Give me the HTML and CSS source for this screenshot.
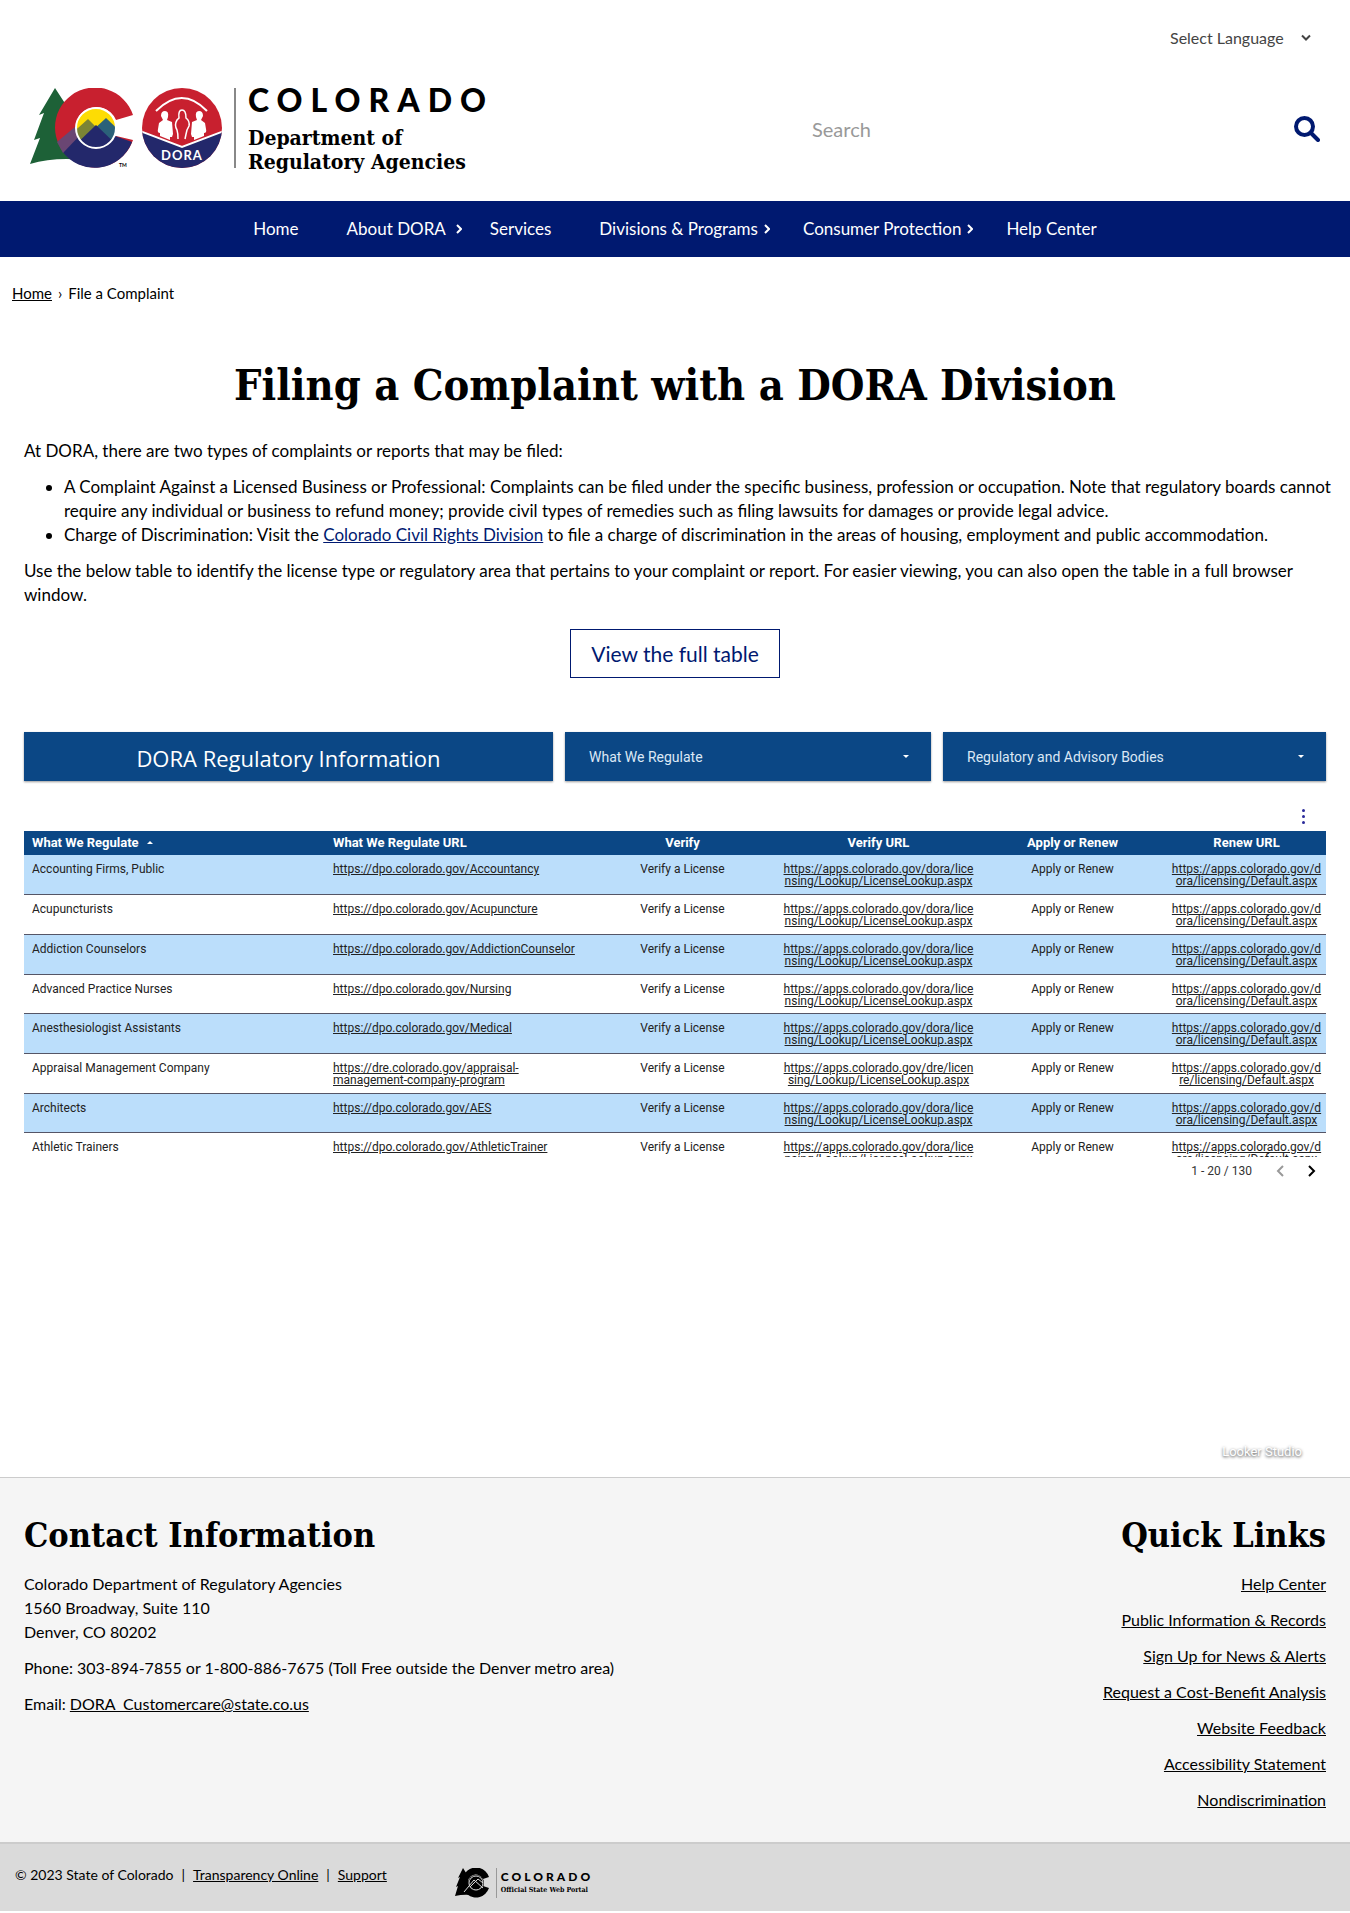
FILE: index.html
```html
<!DOCTYPE html>
<html lang="en">
<head>
<meta charset="utf-8">
<meta name="viewport" content="width=device-width, initial-scale=1">
<title>File a Complaint | DORA</title>
<link rel="stylesheet" href="styles.css">
</head>
<body>
<header class="site-header">
  <div class="language">
    <select class="language-select" aria-label="Select Language">
      <option>Select Language</option>
    </select>
    <svg class="language-arrow" viewBox="0 0 12 8" aria-hidden="true"><path d="M2 1.5l4 4 4-4"/></svg>
  </div>
  <div class="masthead">
    <a class="brand" href="#" aria-label="Colorado Department of Regulatory Agencies">
      <svg class="brand-mark" viewBox="0 0 206 80" aria-hidden="true">
        <defs>
          <clipPath id="sun"><circle cx="66" cy="40" r="20"/></clipPath>
          <clipPath id="seal"><circle cx="152" cy="40" r="40"/></clipPath>
        </defs>
        <path fill="#1d6137" d="M25 0L38 20 34 22 44 40 54 72Q24 69 0 76L10 50 4 52 14 25 9 27Z"/>
        <path fill="#c8202f" d="M103 27A40 40 0 1 0 103 52L86 48A21 21 0 1 1 86 32Z"/>
        <path fill="#23286b" d="M32 63L52 45 60 60 85 48 102 54A40 40 0 0 1 32 63Z"/>
        <path fill="#6a4673" d="M27 54L46 38 53 44 33 65Z"/>
        <g clip-path="url(#sun)">
          <path fill="#fddc04" d="M40 15h60v50H40z"/>
          <path fill="#7b8435" d="M40 47L58 31 67 40 54 54 40 62Z"/>
          <path fill="#2b6179" d="M62 43L76 30 92 45V55H80Z"/>
          <path fill="#23286b" d="M40 62L66 37 92 62Z"/>
        </g>
        <circle cx="66" cy="40" r="20" fill="none" stroke="#fff" stroke-width="2"/>
        <g clip-path="url(#seal)">
          <path fill="#c8202f" d="M110 0h84v80h-84z"/>
          <path fill="#23286b" d="M110 43L152 59 194 43V82H110Z"/>
          <path fill="none" stroke="#fff" stroke-width="2" d="M110 43L152 59 194 43"/>
        </g>
        <path fill="none" stroke="#fff" stroke-width="2" d="M126 23Q152 -3 177 23"/>
        <g fill="#fff">
          <path d="M131 28q0-5 4-5t3 6l-1 3 5 2 1 12-1 3h-2v3l-10-4v-3q-3 0-2-4l1-6 4-3z"/>
          <path d="M173 28q0-5-4-5t-3 6l1 3-5 2-1 12 1 3h2v3l10-4v-3q3 0 2-4l-1-6-4-3z"/>
        </g>
        <path fill="none" stroke="#fff" stroke-width="1.5" d="M148 51q0-6-1-9-3-5 0-10l2-2q-1-8 3-8t4 8q4 3 3 8l-2 4q-1 4-2 9"/>
        <text class="seal-text" x="152" y="72">DORA</text>
        <text class="tm-text" x="89" y="79">TM</text>
        <path fill="#888" d="M204 0h2v80h-2z"/>
      </svg>
      <span class="brand-words">
        <span class="brand-state">COLORADO</span>
        <span class="brand-dept">Department of<br>Regulatory Agencies</span>
      </span>
    </a>
    <form class="search" role="search">
      <input class="search-input" type="search" placeholder="Search" aria-label="Search">
      <button class="search-button" type="button" aria-label="Search">
        <svg viewBox="0 0 26 26" aria-hidden="true"><circle cx="10.5" cy="10.5" r="8.5"/><path d="M17 17l7 7"/></svg>
      </button>
    </form>
  </div>
</header>
<nav class="main-nav" aria-label="Main">
  <ul class="nav-list">
    <li><a class="nav-link" href="#">Home</a></li>
    <li><a class="nav-link nav-parent nav-spaced" href="#">About DORA<svg class="nav-arrow" viewBox="0 0 6 10" aria-hidden="true"><path d="M1 1l4 4-4 4"/></svg></a></li>
    <li><a class="nav-link" href="#">Services</a></li>
    <li><a class="nav-link nav-parent" href="#">Divisions &amp; Programs<svg class="nav-arrow" viewBox="0 0 6 10" aria-hidden="true"><path d="M1 1l4 4-4 4"/></svg></a></li>
    <li><a class="nav-link nav-parent" href="#">Consumer Protection<svg class="nav-arrow" viewBox="0 0 6 10" aria-hidden="true"><path d="M1 1l4 4-4 4"/></svg></a></li>
    <li><a class="nav-link" href="#">Help Center</a></li>
  </ul>
</nav>
<nav class="breadcrumb" aria-label="Breadcrumb"><a href="#">Home</a><span>›</span><span>File a Complaint</span></nav>
<main class="content">
  <h1 class="page-title">Filing a Complaint with a DORA Division</h1>
  <p>At DORA, there are two types of complaints or reports that may be filed:</p>
  <ul class="types">
    <li>A Complaint Against a Licensed Business or Professional: Complaints can be filed under the specific business, profession or occupation. Note that regulatory boards cannot require any individual or business to refund money; provide civil types of remedies such as filing lawsuits for damages or provide legal advice.</li>
    <li>Charge of Discrimination: Visit the <a class="text-link" href="#">Colorado Civil Rights Division</a> to file a charge of discrimination in the areas of housing, employment and public accommodation.</li>
  </ul>
  <p>Use the below table to identify the license type or regulatory area that pertains to your complaint or report. For easier viewing, you can also open the table in a full browser window.</p>
  <a class="full-table" href="#">View the full table</a>
  <section class="report">
    <div class="report-bar">
      <div class="report-title">DORA Regulatory Information</div>
      <button class="report-filter" type="button">What We Regulate<span class="caret"></span></button>
      <button class="report-filter" type="button">Regulatory and Advisory Bodies<span class="caret"></span></button>
    </div>
    <button class="more" type="button" aria-label="More options"><span></span><span></span><span></span></button>
    <div class="table-window">
      <table class="data">
        <colgroup><col class="c1"><col class="c2"><col class="c3"><col class="c4"><col class="c5"><col class="c6"></colgroup>
        <thead><tr><th>What We Regulate<span class="sort"></span></th><th>What We Regulate URL</th><th>Verify</th><th>Verify URL</th><th>Apply or Renew</th><th>Renew URL</th></tr></thead>
        <tbody>
          <tr><td>Accounting Firms, Public</td><td><a href="#">https://dpo.colorado.gov/Accountancy</a></td><td>Verify a License</td><td><a href="#">https://apps.colorado.gov/dora/lice<br>nsing/Lookup/LicenseLookup.aspx</a></td><td>Apply or Renew</td><td><a href="#">https://apps.colorado.gov/d<br>ora/licensing/Default.aspx</a></td></tr>
          <tr><td>Acupuncturists</td><td><a href="#">https://dpo.colorado.gov/Acupuncture</a></td><td>Verify a License</td><td><a href="#">https://apps.colorado.gov/dora/lice<br>nsing/Lookup/LicenseLookup.aspx</a></td><td>Apply or Renew</td><td><a href="#">https://apps.colorado.gov/d<br>ora/licensing/Default.aspx</a></td></tr>
          <tr><td>Addiction Counselors</td><td><a href="#">https://dpo.colorado.gov/AddictionCounselor</a></td><td>Verify a License</td><td><a href="#">https://apps.colorado.gov/dora/lice<br>nsing/Lookup/LicenseLookup.aspx</a></td><td>Apply or Renew</td><td><a href="#">https://apps.colorado.gov/d<br>ora/licensing/Default.aspx</a></td></tr>
          <tr><td>Advanced Practice Nurses</td><td><a href="#">https://dpo.colorado.gov/Nursing</a></td><td>Verify a License</td><td><a href="#">https://apps.colorado.gov/dora/lice<br>nsing/Lookup/LicenseLookup.aspx</a></td><td>Apply or Renew</td><td><a href="#">https://apps.colorado.gov/d<br>ora/licensing/Default.aspx</a></td></tr>
          <tr><td>Anesthesiologist Assistants</td><td><a href="#">https://dpo.colorado.gov/Medical</a></td><td>Verify a License</td><td><a href="#">https://apps.colorado.gov/dora/lice<br>nsing/Lookup/LicenseLookup.aspx</a></td><td>Apply or Renew</td><td><a href="#">https://apps.colorado.gov/d<br>ora/licensing/Default.aspx</a></td></tr>
          <tr><td>Appraisal Management Company</td><td><a href="#">https://dre.colorado.gov/appraisal-<br>management-company-program</a></td><td>Verify a License</td><td><a href="#">https://apps.colorado.gov/dre/licen<br>sing/Lookup/LicenseLookup.aspx</a></td><td>Apply or Renew</td><td><a href="#">https://apps.colorado.gov/d<br>re/licensing/Default.aspx</a></td></tr>
          <tr><td>Architects</td><td><a href="#">https://dpo.colorado.gov/AES</a></td><td>Verify a License</td><td><a href="#">https://apps.colorado.gov/dora/lice<br>nsing/Lookup/LicenseLookup.aspx</a></td><td>Apply or Renew</td><td><a href="#">https://apps.colorado.gov/d<br>ora/licensing/Default.aspx</a></td></tr>
          <tr><td>Athletic Trainers</td><td><a href="#">https://dpo.colorado.gov/AthleticTrainer</a></td><td>Verify a License</td><td><a href="#">https://apps.colorado.gov/dora/lice<br>nsing/Lookup/LicenseLookup.aspx</a></td><td>Apply or Renew</td><td><a href="#">https://apps.colorado.gov/d<br>ora/licensing/Default.aspx</a></td></tr>
        </tbody>
      </table>
    </div>
    <div class="pager">
      <span>1 - 20 / 130</span>
      <button type="button" class="pager-prev" aria-label="Previous page" disabled><svg viewBox="0 0 8 12"><path d="M7 1L2 6l5 5"/></svg></button>
      <button type="button" class="pager-next" aria-label="Next page"><svg viewBox="0 0 8 12"><path d="M1 1l5 5-5 5"/></svg></button>
    </div>
    <div class="studio">Looker Studio</div>
  </section>
</main>
<footer>
  <div class="footer-main">
    <section class="contact">
      <h2>Contact Information</h2>
      <p>Colorado Department of Regulatory Agencies<br>1560 Broadway, Suite 110<br>Denver, CO 80202</p>
      <p>Phone: 303-894-7855 or 1-800-886-7675 (Toll Free outside the Denver metro area)</p>
      <p>Email: <a href="#">DORA_Customercare@state.co.us</a></p>
    </section>
    <section class="quick">
      <h2>Quick Links</h2>
      <ul>
        <li><a href="#">Help Center</a></li>
        <li><a href="#">Public Information &amp; Records</a></li>
        <li><a href="#">Sign Up for News &amp; Alerts</a></li>
        <li><a href="#">Request a Cost-Benefit Analysis</a></li>
        <li><a href="#">Website Feedback</a></li>
        <li><a href="#">Accessibility Statement</a></li>
        <li><a href="#">Nondiscrimination</a></li>
      </ul>
    </section>
  </div>
  <div class="footer-bar">
    <div class="legal"><span>© 2023 State of Colorado</span><span>|</span><a href="#">Transparency Online</a><span>|</span><a href="#">Support</a></div>
    <a class="portal" href="#" aria-label="Colorado Official State Web Portal">
      <svg class="portal-mark" viewBox="0 0 42 30" aria-hidden="true">
        <path d="M8 0L13 8 11 9 17 27Q8 26 0 28L3 18 1 19 5 9 3 10Z"/>
        <path d="M34 9A14 15 0 1 0 34 20L28 18A8 8 0 1 1 28 11Z"/>
        <circle cx="21" cy="15" r="8"/>
        <path class="portal-line" d="M9 24L19 12 28 20M15 19L23 11 28 15"/>
        <circle class="portal-line" cx="21" cy="15" r="7"/>
        <path fill="#999" d="M41 0h1v30h-1z"/>
      </svg>
      <span class="portal-words"><span class="portal-state">COLORADO</span><span class="portal-tag">Official State Web Portal</span></span>
    </a>
  </div>
</footer>
</body>
</html>
```

FILE: styles.css
```css
* { box-sizing: border-box; }
body {
  margin: 0;
  background: #fff;
  color: #000;
  font: 17px/24px Lato, "Open Sans", sans-serif;
}
a { color: inherit; }
button { font: inherit; border: 0; padding: 0; background: none; cursor: pointer; }
p { margin: 0 0 12px; }

/* Header */
.language {
  display: flex;
  justify-content: flex-end;
  align-items: center;
  padding: 24px 38px 0 0;
  height: 52px;
}
.language-select {
  appearance: none;
  border: 0;
  background: none;
  color: #444;
  font: 16px/24px Lato, sans-serif;
  width: 130px;
  padding: 0;
}
.language-arrow { width: 12px; height: 8px; fill: none; stroke: #444; stroke-width: 2; }
.masthead {
  display: flex;
  justify-content: space-between;
  align-items: center;
  height: 149px;
  padding: 4px 30px 0;
}
.brand { display: flex; gap: 12px; text-decoration: none; height: 90px; padding-top: 4px; }
.brand-mark { width: 206px; height: 80px; }
.seal-text { font: 700 13px Lato, sans-serif; fill: #fff; text-anchor: middle; letter-spacing: 1px; }
.tm-text { font: 700 5px Lato, sans-serif; }
.brand-words { display: flex; flex-direction: column; }
.brand-state { font: 900 32px/24px Lato, sans-serif; letter-spacing: 8px; }
.brand-dept { font: 700 21px/24px "DejaVu Serif Condensed", "DejaVu Serif", serif; padding-top: 14px; }
.search { display: flex; align-items: center; width: 508px; }
.search-input {
  flex: 1;
  min-width: 0;
  border: 0;
  padding: 0;
  background: none;
  font: 20px/28px Lato, sans-serif;
}
.search-input::placeholder { color: #999; }
.search-button { width: 26px; height: 26px; }
.search-button svg { display: block; fill: none; stroke: #001970; stroke-width: 4; stroke-linecap: round; }

/* Main navigation */
.main-nav { background: #001970; }
.nav-list { display: flex; justify-content: center; margin: 0; padding: 0; list-style: none; }
.nav-link {
  display: flex;
  align-items: center;
  height: 56px;
  padding: 0 24px;
  color: #fff;
  text-decoration: none;
}
.nav-parent { padding-right: 9px; gap: 6px; }
.nav-spaced { padding-right: 4px; gap: 10px; }
.nav-arrow { width: 6px; height: 10px; fill: none; stroke: #fff; stroke-width: 2; }

.breadcrumb { display: flex; gap: 6px; padding: 24px 12px; font-size: 15px; }

/* Page content */
.content { padding: 0 24px; }
.page-title {
  margin: 28px 0 26px;
  text-align: center;
  font: 700 43px/56px "DejaVu Serif Condensed", "DejaVu Serif", serif;
}
.types { margin: 0 -16px 12px 0; padding-left: 40px; }
.text-link { color: #001970; }
.full-table {
  display: block;
  width: 210px;
  margin: 22px auto 54px;
  border: 1px solid #001970;
  color: #001970;
  font-size: 21px;
  line-height: 47px;
  text-align: center;
  text-decoration: none;
}

/* Embedded report */
.report { display: flow-root; font-family: Roboto, sans-serif; height: 745px; }
.report-bar { display: grid; grid-template-columns: 529fr 366fr 383fr; gap: 12px; color: #fff; }
.report-title, .report-filter {
  height: 49px;
  background: #0b4785;
  box-shadow: 0 1px 2px rgba(0, 0, 0, .4);
}
.report-title { font: 22px/52px "Open Sans", sans-serif; text-align: center; }
.report-filter {
  display: flex;
  align-items: center;
  justify-content: space-between;
  padding: 0 22px 0 24px;
  color: #dce8f5;
  font: 14px/16px Roboto, sans-serif;
}
.caret { border: 3px solid transparent; border-top-color: #fff; border-bottom: 0; }
.more {
  display: flex;
  flex-direction: column;
  gap: 3px;
  margin: 28px 21px 7px auto;
}
.more span { width: 3px; height: 3px; border-radius: 50%; background: #2a2a9a; }
.table-window { height: 326px; overflow: hidden; }
.data {
  width: 100%;
  height: 342px;
  border-collapse: collapse;
  table-layout: fixed;
  color: #222;
  font: 12px/12px Roboto, sans-serif;
}
.c1 { width: 301px; }
.c2 { width: 262px; }
.c3 { width: 191px; }
.c4 { width: 201px; }
.c5 { width: 187px; }
.c6 { width: 161px; }
.data th { height: 24px; padding: 0; background: #0b4785; color: #fff; font-size: 13px; font-weight: 700; }
.data td { height: 39px; padding: 8px 0 0; border-bottom: 1px solid #556; vertical-align: top; text-align: center; white-space: nowrap; }
.data th:nth-child(-n+2), .data td:nth-child(-n+2) { padding-left: 8px; text-align: left; }
.data tbody tr:nth-child(odd) { background: #bbdefb; }
.sort { display: inline-block; margin-left: 8px; vertical-align: 3px; border: 3px solid transparent; border-bottom-color: #fff; border-top: 0; }
.pager { display: flex; align-items: center; justify-content: flex-end; gap: 24px; padding: 6px 10px 0 0; color: #333; font-size: 12px; line-height: 16px; }
.pager svg { display: block; width: 8px; height: 12px; fill: none; stroke: #000; stroke-width: 2; }
.pager-prev svg { stroke: #999; }
.studio { margin-top: 265px; padding-right: 24px; color: #fff; text-align: right; font-size: 13px; line-height: 16px; text-shadow: 0 1px 3px rgba(0, 0, 0, .8); }

/* Footer */
.footer-main {
  display: flex;
  justify-content: space-between;
  padding: 34px 24px 18px;
  border-top: 1px solid #ccc;
  background: #f5f5f5;
  font-size: 16px;
}
h2 { margin: 0 0 14px; font: 700 34px/46px "DejaVu Serif Condensed", "DejaVu Serif", serif; }
.quick { text-align: right; }
.quick ul { margin: 0; padding: 0; list-style: none; }
.quick li { margin-bottom: 12px; }
.footer-bar { display: flex; align-items: flex-start; gap: 68px; height: 69px; padding: 20px 15px 0; border-top: 2px solid #ccc; background: #dadada; }
.legal { display: flex; gap: 8px; font-size: 14px; line-height: 22px; }
.portal { display: flex; gap: 4px; margin-top: 4px; text-decoration: none; }
.portal-mark { width: 42px; height: 30px; }
.portal-line { fill: none; stroke: #dadada; stroke-width: 1; }
.portal-words { display: flex; flex-direction: column; padding-top: 3px; }
.portal-state { font: 900 12px/12px Lato, sans-serif; letter-spacing: 3px; }
.portal-tag { font: 700 7px/14px "DejaVu Serif Condensed", "DejaVu Serif", serif; }
```
